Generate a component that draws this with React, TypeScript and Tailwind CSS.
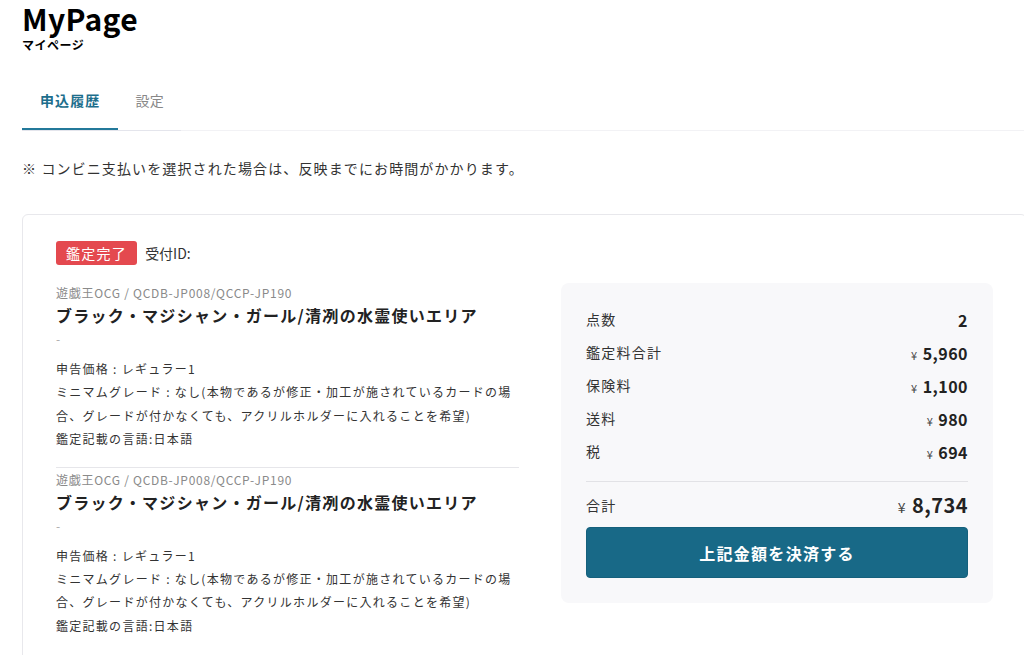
import React from "react"

interface Item {
  category: string
  title: string
  price: string
  grade: string
  language: string
}

const items: Item[] = [
  {
    category: "遊戯王OCG / QCDB-JP008/QCCP-JP190",
    title: "ブラック・マジシャン・ガール/清冽の水霊使いエリア",
    price: "申告価格 : レギュラー1",
    grade:
      "ミニマムグレード : なし(本物であるが修正・加工が施されているカードの場合、グレードが付かなくても、アクリルホルダーに入れることを希望)",
    language: "鑑定記載の言語:日本語",
  },
  {
    category: "遊戯王OCG / QCDB-JP008/QCCP-JP190",
    title: "ブラック・マジシャン・ガール/清冽の水霊使いエリア",
    price: "申告価格 : レギュラー1",
    grade:
      "ミニマムグレード : なし(本物であるが修正・加工が施されているカードの場合、グレードが付かなくても、アクリルホルダーに入れることを希望)",
    language: "鑑定記載の言語:日本語",
  },
]

const summary = [
  { label: "点数", value: "2", yen: false },
  { label: "鑑定料合計", value: "5,960", yen: true },
  { label: "保険料", value: "1,100", yen: true },
  { label: "送料", value: "980", yen: true },
  { label: "税", value: "694", yen: true },
]

export default function App() {
  return (
    <div
      className="w-full h-[655px] overflow-hidden bg-white text-[#333] tracking-[0.08em]"
      style={{ fontFamily: '"Noto Sans CJK JP", "Noto Sans", sans-serif' }}
    >
      <div className="pl-[22px]">
        {/* heading */}
        <h1 className="text-[30px] leading-[36px] font-bold text-black tracking-[0.01em]">MyPage</h1>
        <p className="mt-px text-[12px] leading-[16px] font-bold text-black tracking-[0.04em]">マイページ</p>

        {/* tabs */}
        <div className="mt-[37px] flex items-end">
          <div className="flex border-b border-[#e4e5ec]">
            <button className="px-[18px] pb-[18px] text-[14px] leading-[20px] font-bold text-[#1d6e8c] border-b-2 border-[#23799a] tracking-[0.08em]">
              申込履歴
            </button>
            <button className="px-[17px] pb-[18px] text-[14px] leading-[20px] text-[#888] border-b-2 border-transparent tracking-[0.02em]">
              設定
            </button>
          </div>
          <div className="flex-1 border-b border-[#f2f2f5]" />
        </div>

        {/* notice */}
        <p className="mt-[25px] text-[14px] leading-[24px] tracking-[0.08em]">
          ※ コンビニ支払いを選択された場合は、反映までにお時間がかかります。
        </p>

        {/* card */}
        <div className="mt-[34px] w-[1005px] border border-[#e8e8ec] rounded-[6px] pl-[33px] pr-[33px] pt-[26px] pb-10">
          <div className="flex items-center gap-2">
            <span className="inline-flex items-center h-6 px-[10px] rounded-[3px] bg-[#e4494f] text-white text-[14px]">
              鑑定完了
            </span>
            <span className="text-[14px] leading-6 tracking-normal">受付ID:</span>
          </div>

          <div className="mt-[18px] flex gap-[42px]">
            {/* items */}
            <div className="w-[463px]">
              {items.map((item, i) => (
                <div
                  key={i}
                  className={i > 0 ? "border-t border-[#e6e6ea] pt-[2px]" : ""}
                >
                  <p className="text-[12px] leading-[20px] text-[#8a8a8a] tracking-[0.06em]">{item.category}</p>
                  <p className="text-[16px] leading-[24px] font-bold text-[#222]">{item.title}</p>
                  <p className="text-[12px] leading-[24px] text-[#aaa]">-</p>
                  <div className="mt-[6px] pb-[16px] text-[12px] leading-[23.4px]">
                    <p>{item.price}</p>
                    <p>{item.grade}</p>
                    <p>{item.language}</p>
                  </div>
                </div>
              ))}
            </div>

            {/* summary */}
            <div className="w-[432px] self-start bg-[#f8f8fa] rounded-[8px] px-[25px] pt-[20px] pb-[25px]">
              {summary.map((row) => (
                <div key={row.label} className="flex items-center justify-between h-[33px]">
                  <span className="text-[14px]">{row.label}</span>
                  <span className="flex items-baseline gap-[5px] tracking-[0.03em]">
                    {row.yen && <span className="text-[11px] text-[#444]">¥</span>}
                    <span className="text-[16px] font-bold text-[#222]">{row.value}</span>
                  </span>
                </div>
              ))}
              <div className="mt-[13px] border-t border-[#e2e2e6] pt-[9px]">
                <div className="flex items-center justify-between h-[28px]">
                  <span className="text-[14px]">合計</span>
                  <span className="flex items-baseline gap-[6px] tracking-[0.03em]">
                    <span className="text-[14px] text-[#444]">¥</span>
                    <span className="text-[20px] font-bold text-[#222]">8,734</span>
                  </span>
                </div>
                <button className="mt-[8px] w-full h-[51px] rounded-[4px] bg-[#186987] border border-[#15607c] text-white text-[16px] font-bold">
                  上記金額を決済する
                </button>
              </div>
            </div>
          </div>
        </div>
      </div>
    </div>
  )
}
